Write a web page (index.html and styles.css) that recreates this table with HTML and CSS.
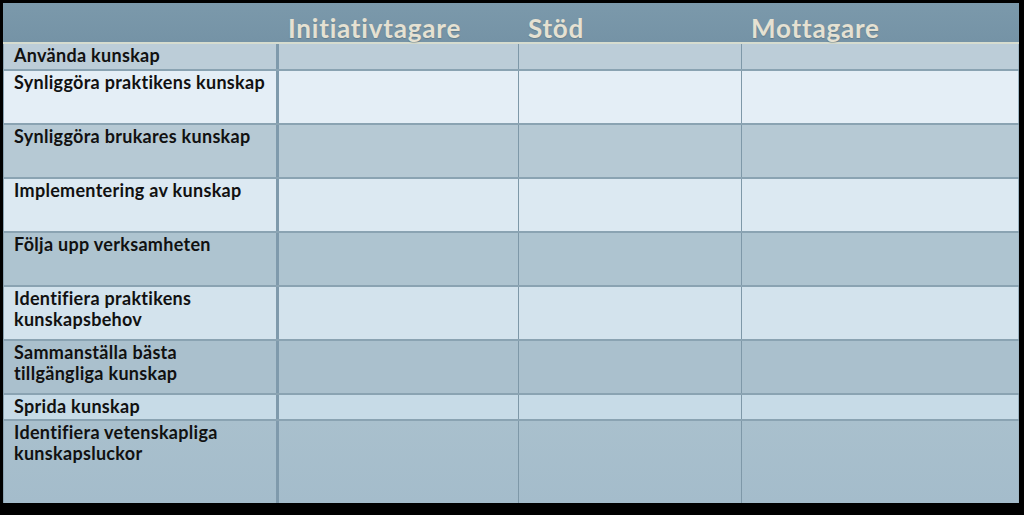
FILE: index.html
```html
<!DOCTYPE html>
<html lang="sv">
<head>
<meta charset="utf-8">
<title>Kunskapsroller</title>
<link rel="stylesheet" href="styles.css">
</head>
<body>
<div class="board">
  <div class="head">
    <div class="hcell"></div>
    <div class="hcell">Initiativtagare</div>
    <div class="hcell">Stöd</div>
    <div class="hcell">Mottagare</div>
  </div>
  <div class="row r1 h27"><div class="cell label">Använda kunskap</div><div class="cell"></div><div class="cell"></div><div class="cell"></div></div>
  <div class="row r2 h54"><div class="cell label">Synliggöra praktikens kunskap</div><div class="cell"></div><div class="cell"></div><div class="cell"></div></div>
  <div class="row r3 h54"><div class="cell label">Synliggöra brukares kunskap</div><div class="cell"></div><div class="cell"></div><div class="cell"></div></div>
  <div class="row r4 h54"><div class="cell label">Implementering av kunskap</div><div class="cell"></div><div class="cell"></div><div class="cell"></div></div>
  <div class="row r5 h54"><div class="cell label">Följa upp verksamheten</div><div class="cell"></div><div class="cell"></div><div class="cell"></div></div>
  <div class="row r6 h54"><div class="cell label">Identifiera praktikens<br>kunskapsbehov</div><div class="cell"></div><div class="cell"></div><div class="cell"></div></div>
  <div class="row r7 h54"><div class="cell label">Sammanställa bästa<br>tillgängliga kunskap</div><div class="cell"></div><div class="cell"></div><div class="cell"></div></div>
  <div class="row r8 h26"><div class="cell label">Sprida kunskap</div><div class="cell"></div><div class="cell"></div><div class="cell"></div></div>
  <div class="row r9 h82 last"><div class="cell label">Identifiera vetenskapliga<br>kunskapsluckor</div><div class="cell"></div><div class="cell"></div><div class="cell"></div></div>
</div>
</body>
</html>
```
FILE: styles.css
```css
html, body {
  margin: 0;
  padding: 0;
  background: #000;
  width: 1024px;
  height: 515px;
  overflow: hidden;
}
.board {
  margin: 3px 0 0 3px;
  width: 1016px;
  display: flex;
  flex-direction: column;
  font-family: Lato, "Liberation Sans", sans-serif;
  font-weight: 700;
}
.head {
  height: 41px;
  box-sizing: border-box;
  background: linear-gradient(#7b99ab, #7593a6);
  border-bottom: 2px solid #d6dccf;
  display: grid;
  grid-template-columns: 276px 240px 223px 277px;
}
.hcell {
  color: #e5e1d2;
  font-size: 26px;
  line-height: 26px;
  padding: 12px 0 0 9px;
  letter-spacing: 0.8px;
  text-shadow: 0 1px 1px rgba(60, 80, 90, 0.35);
}
.row {
  display: grid;
  grid-template-columns: 276px 240px 223px 277px;
  box-sizing: border-box;
  border-bottom: 2px solid #8aa3b2;
}
.row.last { border-bottom: none; }
.h27 { height: 27px; }
.h54 { height: 54px; }
.h26 { height: 26px; }
.h82 { height: 82px; }
.cell {
  border-right: 1px solid #7e98a8;
}
.cell:first-child {
  border-right: 3px solid #7f9aac;
  border-left: 1px solid #8aa3b2;
}
.cell:last-child {
  border-right: 1px solid #9fb6c4;
}
.label {
  color: #111;
  font-size: 18px;
  line-height: 21px;
  padding: 1px 0 0 10px;
  letter-spacing: 0.3px;
}
.r1 { background: #bccdd8; }
.r2 { background: #e4eef6; }
.r3 { background: #b6c9d4; }
.r4 { background: #dce9f2; }
.r5 { background: #aec4d0; }
.r6 { background: #d3e3ed; }
.r7 { background: #aac0cd; }
.r8 { background: #c7dbe7; }
.r9 { background: linear-gradient(#a9c0cd, #a4bccb); }
```
